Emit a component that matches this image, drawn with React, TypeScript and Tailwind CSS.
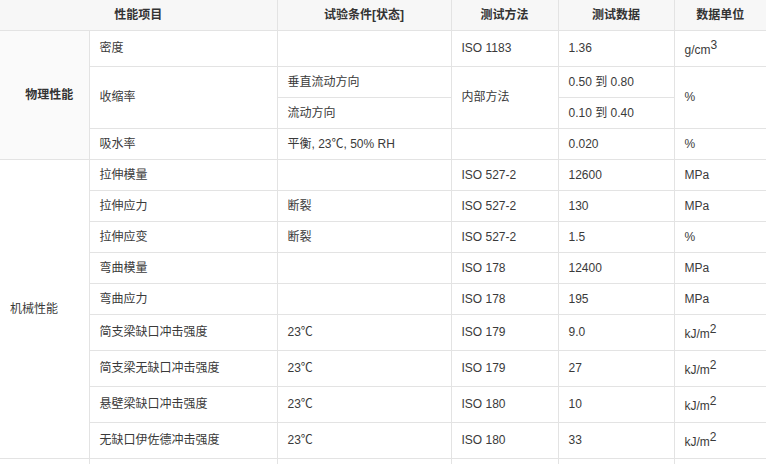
import type { ReactNode } from 'react';

type Row = {
  cat?: { label: string; span: number; bold?: boolean };
  item?: { label: string; span?: number };
  cond?: { label: string; span?: number };
  method?: { label: string; span?: number };
  value: string;
  unit?: { label: ReactNode; span?: number };
  tall?: boolean;
};

const sq = (base: string, exp: string) => (
  <>
    {base}
    <sup className="static align-super text-[12px] leading-none">{exp}</sup>
  </>
);

const rows: Row[] = [
  { cat: { label: '物理性能', span: 4, bold: true }, item: { label: '密度' }, cond: { label: '' }, method: { label: 'ISO 1183' }, value: '1.36', unit: { label: sq('g/cm', '3') }, tall: true },
  { item: { label: '收缩率', span: 2 }, cond: { label: '垂直流动方向' }, method: { label: '内部方法', span: 2 }, value: '0.50 到 0.80', unit: { label: '%', span: 2 } },
  { cond: { label: '流动方向' }, value: '0.10 到 0.40' },
  { item: { label: '吸水率' }, cond: { label: '平衡, 23℃, 50% RH' }, method: { label: '' }, value: '0.020', unit: { label: '%' } },
  { cat: { label: '机械性能', span: 9 }, item: { label: '拉伸模量' }, cond: { label: '' }, method: { label: 'ISO 527-2' }, value: '12600', unit: { label: 'MPa' } },
  { item: { label: '拉伸应力' }, cond: { label: '断裂' }, method: { label: 'ISO 527-2' }, value: '130', unit: { label: 'MPa' } },
  { item: { label: '拉伸应变' }, cond: { label: '断裂' }, method: { label: 'ISO 527-2' }, value: '1.5', unit: { label: '%' } },
  { item: { label: '弯曲模量' }, cond: { label: '' }, method: { label: 'ISO 178' }, value: '12400', unit: { label: 'MPa' } },
  { item: { label: '弯曲应力' }, cond: { label: '' }, method: { label: 'ISO 178' }, value: '195', unit: { label: 'MPa' } },
  { item: { label: '简支梁缺口冲击强度' }, cond: { label: '23℃' }, method: { label: 'ISO 179' }, value: '9.0', unit: { label: sq('kJ/m', '2') }, tall: true },
  { item: { label: '简支梁无缺口冲击强度' }, cond: { label: '23℃' }, method: { label: 'ISO 179' }, value: '27', unit: { label: sq('kJ/m', '2') }, tall: true },
  { item: { label: '悬壁梁缺口冲击强度' }, cond: { label: '23℃' }, method: { label: 'ISO 180' }, value: '10', unit: { label: sq('kJ/m', '2') }, tall: true },
  { item: { label: '无缺口伊佐德冲击强度' }, cond: { label: '23℃' }, method: { label: 'ISO 180' }, value: '33', unit: { label: sq('kJ/m', '2') }, tall: true },
  { cat: { label: '', span: 1 }, item: { label: '' }, cond: { label: '' }, method: { label: '' }, value: '', unit: { label: '' } },
];

const cell = 'border border-[#e3e3e3] px-[10px] py-0 align-middle whitespace-nowrap';

export default function App() {
  return (
    <div className="w-[766px] h-[464px] overflow-hidden bg-white">
      <table
        className="w-[766px] table-fixed border-collapse text-[12px] leading-[16px] text-[#3a3a3a]"
        style={{ fontFamily: '"Liberation Sans", "Noto Sans CJK SC", sans-serif' }}
      >
        <colgroup>
          <col className="w-[89px]" />
          <col className="w-[188px]" />
          <col className="w-[174px]" />
          <col className="w-[107px]" />
          <col className="w-[116px]" />
          <col className="w-[92px]" />
        </colgroup>
        <thead>
          <tr className="h-[30px] bg-[#f7f7f7] text-[#333]">
            <th colSpan={2} className={`${cell} border-t-0 border-l-0 text-center font-bold`}>性能项目</th>
            <th className={`${cell} border-t-0 text-center font-bold`}>试验条件[状态]</th>
            <th className={`${cell} border-t-0 text-center font-bold`}>测试方法</th>
            <th className={`${cell} border-t-0 text-center font-bold`}>测试数据</th>
            <th className={`${cell} border-t-0 border-r-0 text-center font-bold`}>数据单位</th>
          </tr>
        </thead>
        <tbody>
          {rows.map((r, i) => (
            <tr key={i} className={r.tall ? 'h-[36px]' : 'h-[31px]'}>
              {r.cat && (
                <td
                  rowSpan={r.cat.span}
                  className={`${cell} border-l-0 ${r.cat.bold ? 'bg-[#fafafa] pl-[20px] text-center font-bold text-[#333]' : 'text-left'}`}
                >
                  {r.cat.label}
                </td>
              )}
              {r.item && <td rowSpan={r.item.span} className={cell}>{r.item.label}</td>}
              {r.cond && <td rowSpan={r.cond.span} className={cell}>{r.cond.label}</td>}
              {r.method && <td rowSpan={r.method.span} className={cell}>{r.method.label}</td>}
              <td className={cell}>{r.value}</td>
              {r.unit && <td rowSpan={r.unit.span} className={`${cell} border-r-0`}>{r.unit.label}</td>}
            </tr>
          ))}
        </tbody>
      </table>
    </div>
  );
}
